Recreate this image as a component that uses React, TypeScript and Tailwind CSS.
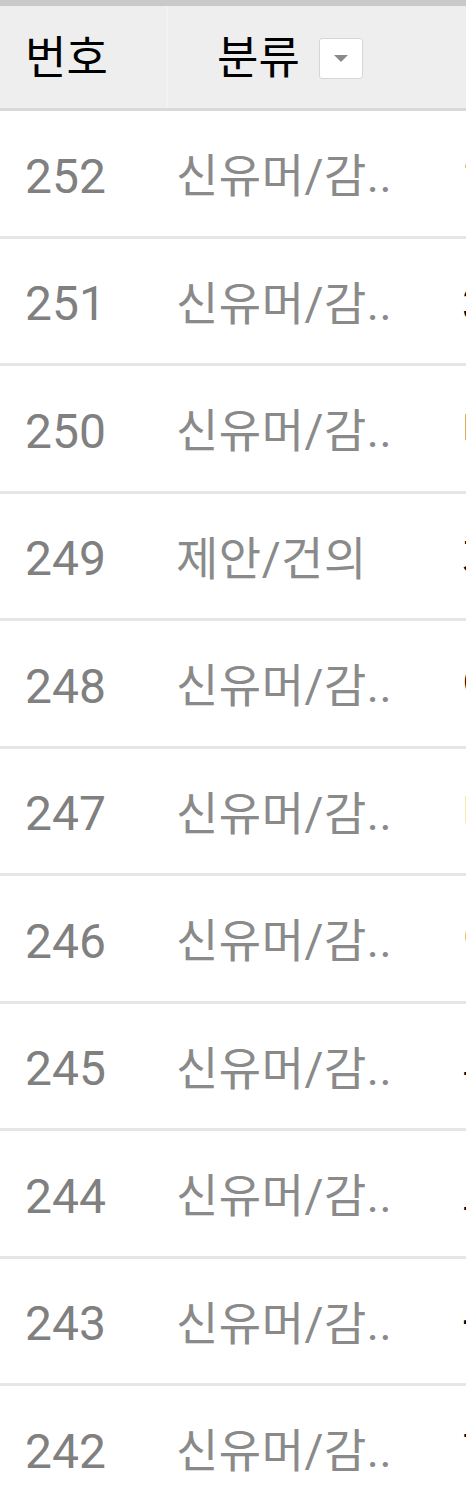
import React from 'react';

interface Post {
  no: number;
  category: string;
  title: string;
}

const posts: Post[] = [
  { no: 252, category: '신유머/감..', title: '1월의 유머 모음' },
  { no: 251, category: '신유머/감..', title: '3분 만에 웃기' },
  { no: 250, category: '신유머/감..', title: '대박 사건' },
  { no: 249, category: '제안/건의', title: '자유게시판 건의' },
  { no: 248, category: '신유머/감..', title: '어제 본 영상' },
  { no: 247, category: '신유머/감..', title: '다들 이거 봤어요?' },
  { no: 246, category: '신유머/감..', title: '이런 일이' },
  { no: 245, category: '신유머/감..', title: '추천 영상' },
  { no: 244, category: '신유머/감..', title: '오늘의 짤' },
  { no: 243, category: '신유머/감..', title: '一 감동 스토리' },
  { no: 242, category: '신유머/감..', title: '한번 보세요' },
];

const font = { fontFamily: 'Roboto, "Noto Sans CJK KR", sans-serif' };

export default function App() {
  return (
    <div className="w-[466px] h-[1507px] overflow-hidden bg-white" style={font}>
      <div className="h-[6px] bg-[#c9c9c9]" />
      {/* Header */}
      <div className="flex h-[105px] bg-[#eeeeee] border-b-[3px] border-[#d9d9d9]">
        <div className="w-[168px] shrink-0 flex items-center pl-[25px] pt-[3px] border-r-2 border-[#f2f2f2] text-[45px] text-black">
          번호
        </div>
        <div className="w-[294px] shrink-0 flex items-center pl-[49px] pt-[3px] text-[45px] text-black">
          <span>분류</span>
          <span className="ml-[19px] w-[44px] h-[41px] bg-white border border-[#d6d6d6] rounded-[3px] flex items-center justify-center">
            <svg width="14" height="8" viewBox="0 0 14 8">
              <path d="M0 0 L14 0 L7 7 Z" fill="#8a8a8a" />
            </svg>
          </span>
        </div>
        <div className="flex-1" />
      </div>
      {/* Rows */}
      {posts.map((p) => (
        <div key={p.no} className="flex h-[127.5px] pt-[7px] border-b-[3px] border-[#e6e6e6] items-center">
          <div className="w-[168px] shrink-0 pl-[25px] text-[48px] text-[#808080]">{p.no}</div>
          <div className="w-[294px] shrink-0 pl-[8px] text-[46px] text-[#8a8a8a] whitespace-nowrap tracking-[0.5px]">
            {p.category}
          </div>
          <div className="flex-1 overflow-hidden whitespace-nowrap text-[45px] text-black">{p.title}</div>
        </div>
      ))}
    </div>
  );
}
